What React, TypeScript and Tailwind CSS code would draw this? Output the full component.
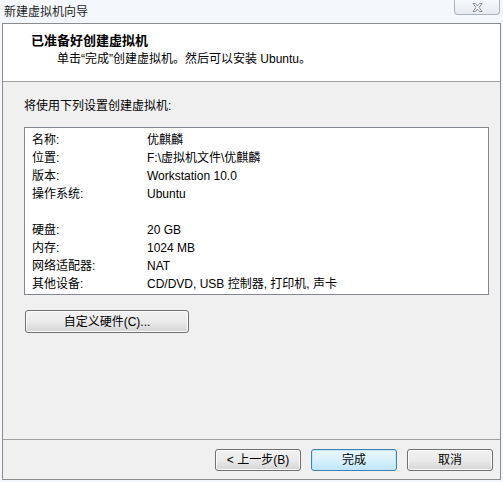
import React from "react";

const settings: [string, string][] = [
  ["名称:", "优麒麟"],
  ["位置:", "F:\\虚拟机文件\\优麒麟"],
  ["版本:", "Workstation 10.0"],
  ["操作系统:", "Ubuntu"],
  ["", ""],
  ["硬盘:", "20 GB"],
  ["内存:", "1024 MB"],
  ["网络适配器:", "NAT"],
  ["其他设备:", "CD/DVD, USB 控制器, 打印机, 声卡"],
];

function WinButton({ label, primary }: { label: string; primary?: boolean }) {
  return (
    <button
      className={
        "flex h-[22px] w-[86px] items-center justify-center rounded-[3px] border text-[12px] text-black " +
        (primary
          ? "border-[#3c7fb1] bg-gradient-to-b from-[#eaf6fd] via-[#d9f0fc] to-[#bee6fd] shadow-[inset_0_0_0_1px_#c5e7f8]"
          : "border-[#707070] bg-gradient-to-b from-[#f2f2f2] via-[#ebebeb] to-[#d5d5d5] shadow-[inset_0_0_0_1px_#fbfbfb]")
      }
    >
      {label}
    </button>
  );
}

export default function App() {
  return (
    <div
      className="relative h-[482px] w-[503px] overflow-hidden bg-[#f4f7fb] text-black"
      style={{ fontFamily: '"Liberation Sans", "Noto Sans CJK SC", sans-serif' }}
    >
      {/* title bar */}
      <div className="flex h-[23px] items-center pl-[4px] text-[12px] leading-none text-[#1e1e1e]">
        新建虚拟机向导
      </div>
      <div className="absolute right-[3px] top-0 flex h-[15px] w-[46px] items-center justify-center rounded-b-[4px] border border-t-0 border-[#a9b1bb] bg-gradient-to-b from-[#f7f9fb] to-[#e6ebf0]">
        <svg width="11" height="9" viewBox="0 0 11 9">
          <path
            d="M1 0.5 L3.5 0.5 L5.5 3 L7.5 0.5 L10 0.5 L7 4.5 L10 8.5 L7.5 8.5 L5.5 6 L3.5 8.5 L1 8.5 L4 4.5 Z"
            fill="#ffffff"
            stroke="#7b828a"
            strokeWidth="0.9"
            strokeLinejoin="round"
          />
        </svg>
      </div>

      {/* wizard frame */}
      <div className="mx-[2px] flex h-[457px] w-[499px] flex-col border border-[#8c8c8c] bg-[#f0f0f0]">
        <div className="h-[58px] border-b border-[#a0a0a0] bg-white">
          <div className="pl-[28px] pt-[9px] text-[13px] font-bold leading-[16px]">已准备好创建虚拟机</div>
          <div className="pl-[54px] pt-[2px] text-[12px] leading-[16px]">
            单击“完成”创建虚拟机。然后可以安装 Ubuntu。
          </div>
        </div>

        <div className="flex-1 pl-[21px]">
          <div className="pt-[16px] text-[12px] leading-[16px]">将使用下列设置创建虚拟机:</div>
          <div className="mt-[13px] h-[168px] w-[465px] border border-[#828790] bg-white pl-[7px] pt-[3px]">
            {settings.map(([k, v], i) => (
              <div key={i} className="flex h-[18px] items-center text-[12px]">
                <span className="w-[115px]">{k}</span>
                <span>{v}</span>
              </div>
            ))}
          </div>
          <button className="ml-[1px] mt-[15px] flex h-[23px] w-[164px] items-center justify-center rounded-[3px] border border-[#707070] bg-gradient-to-b from-[#f2f2f2] via-[#ebebeb] to-[#d5d5d5] text-[12px] shadow-[inset_0_0_0_1px_#fbfbfb]">
            自定义硬件(C)...
          </button>
        </div>

        <div className="flex h-[40px] items-start justify-end gap-[10px] border-t border-[#a0a0a0] pr-[7px] pt-[9px]">
          <WinButton label="< 上一步(B)" />
          <WinButton label="完成" primary />
          <WinButton label="取消" />
        </div>
      </div>
    </div>
  );
}
